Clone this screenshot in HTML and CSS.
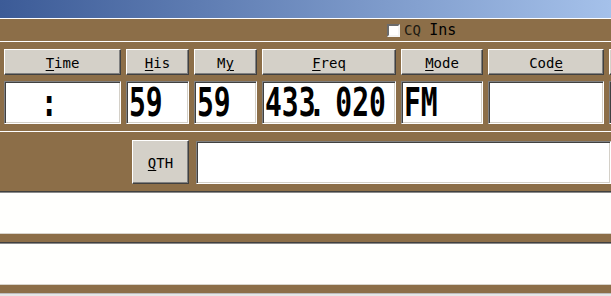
FILE: index.html
```html
<!DOCTYPE html>
<html lang="en">
<head>
    <meta charset="UTF-8">
    <meta name="viewport" content="width=device-width, initial-scale=1.0">
    <title>Log Entry</title>
    <link rel="stylesheet" href="styles.css">
</head>
<body>
    <div class="window">
        <div class="titlebar"></div>

        <div class="panel options">
            <span class="check"></span>
            <span class="cq">CQ <span class="ins">Ins</span></span>
        </div>

        <div class="panel fields">
            <div class="col col-time">
                <button class="btn"><u>T</u>ime</button>
                <div class="edit"><span class="big">  :  </span></div>
            </div>
            <div class="col col-his">
                <button class="btn"><u>H</u>is</button>
                <div class="edit"><span class="big">59</span></div>
            </div>
            <div class="col col-my">
                <button class="btn">M<u>y</u></button>
                <div class="edit"><span class="big">59</span></div>
            </div>
            <div class="col col-freq">
                <button class="btn"><u>F</u>req</button>
                <div class="edit"><span class="big">43<span class="tight">3.</span> 020</span></div>
            </div>
            <div class="col col-mode">
                <button class="btn"><u>M</u>ode</button>
                <div class="edit"><span class="big">FM</span></div>
            </div>
            <div class="col col-code">
                <button class="btn">Cod<u>e</u></button>
                <div class="edit"></div>
            </div>
            <div class="col col-more">
                <button class="btn"></button>
                <div class="edit"></div>
            </div>
        </div>

        <div class="panel qth">
            <button class="btn qth-btn"><u>Q</u>TH</button>
            <div class="edit qth-edit"></div>
        </div>

        <div class="memo"></div>
        <div class="strip"></div>
        <div class="memo"></div>
        <div class="strip"></div>
        <div class="tail"></div>
    </div>
</body>
</html>
```
FILE: styles.css
```css
body {
    margin: 0;
    overflow: hidden;
    background-color: #8c6e48;
    font-family: "DejaVu Sans Mono", "Liberation Mono", monospace;
}

.window {
    width: 100%;
    overflow: hidden;
}

.titlebar {
    height: 18px;
    background: linear-gradient(to right, #3c5b97, #a5c1ea);
}

.panel {
    background-color: #8c6e48;
    border-top: 1px solid #ffffff;
}

/* CQ / Ins row */
.options {
    height: 22px;
    display: flex;
    align-items: center;
    padding-left: 387px;
}

.check {
    width: 9px;
    height: 9px;
    background: #ffffff;
    border: 2px solid;
    border-color: #6b6b6b #f4f4f4 #f4f4f4 #6b6b6b;
}

.cq {
    margin-left: 4px;
    font-size: 14px;
    color: #1e1a12;
}

.ins {
    font-size: 15px;
    color: #000000;
}

/* field row */
.fields {
    display: flex;
    gap: 5px;
    padding: 7px 0 7px 4px;
    overflow: hidden;
}

.col {
    display: flex;
    flex-direction: column;
    gap: 6px;
    flex: none;
}

.col-time { width: 117px; }
.col-his { width: 63px; }
.col-my { width: 63px; }
.col-freq { width: 134px; }
.col-mode { width: 82px; }
.col-code { width: 116px; }
.col-more { width: 100px; }

.btn {
    display: block;
    height: 26px;
    width: 100%;
    box-sizing: border-box;
    padding: 2px 0 0 0;
    background: #d4d0c8;
    border: 1px solid;
    border-color: #ffffff #404040 #404040 #ffffff;
    box-shadow: inset -1px -1px #808080;
    font-family: "DejaVu Sans Mono", monospace;
    font-size: 14px;
    color: #000000;
}

.btn u {
    text-underline-offset: 2px;
}

.edit {
    height: 43px;
    box-sizing: border-box;
    display: flex;
    align-items: center;
    padding-left: 2px;
    background: #ffffff;
    border: 1px solid;
    border-color: #808080 #ffffff #ffffff #808080;
    box-shadow: inset 1px 1px #404040, inset -1px -1px #d4d0c8;
    white-space: pre;
}

.big {
    display: inline-block;
    font-size: 28px;
    font-weight: bold;
    line-height: 0.9;
    color: #000000;
    transform: scaleY(1.42);
}

.tight {
    letter-spacing: -7px;
}

/* QTH row */
.qth {
    display: flex;
    align-items: flex-start;
    gap: 7px;
    padding: 8px 0 7px 132px;
}

.qth-btn {
    width: 57px;
    height: 44px;
    flex: none;
}

.qth-edit {
    flex: 1;
    margin-top: 1px;
}

/* remark boxes */
.memo {
    height: 43px;
    box-sizing: border-box;
    background: #fffffd;
    border-top: 1px solid #404040;
    border-bottom: 1px solid #d8d4cc;
    box-shadow: inset 0 1px #8a8a8a;
}

.strip {
    height: 8px;
    background-color: #8c6e48;
}

.tail {
    height: 10px;
    border-top: 1px solid #bcbcbc;
    background: #e6e6e6;
}
```
